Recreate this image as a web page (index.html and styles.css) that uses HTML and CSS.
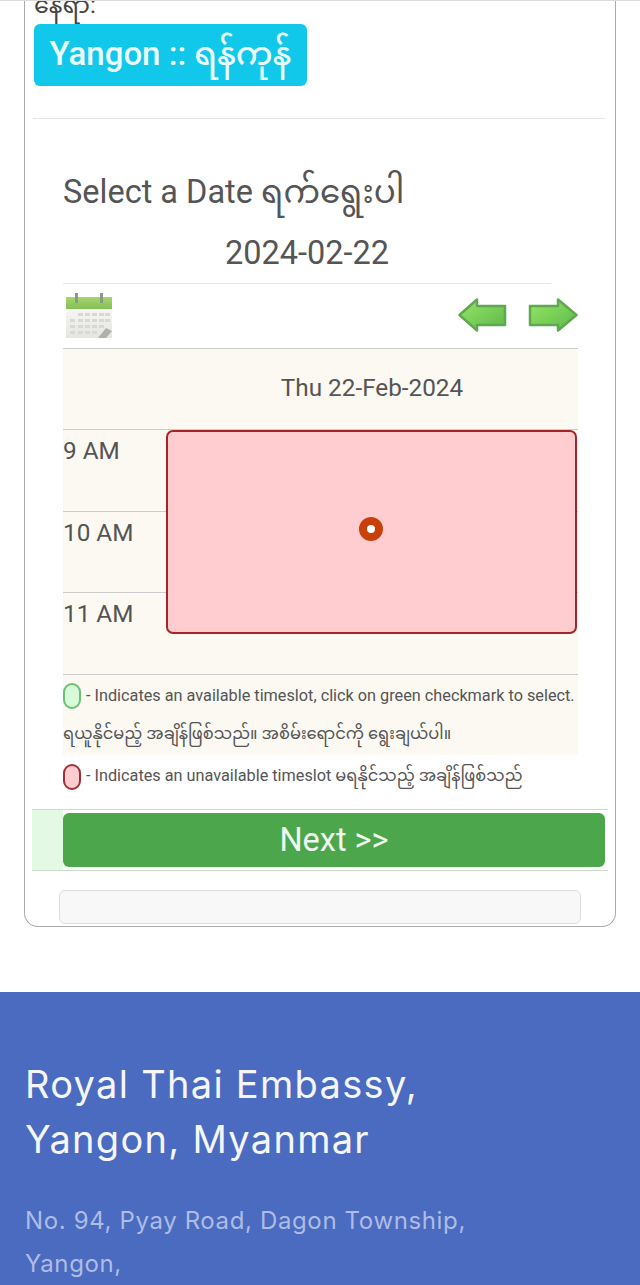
FILE: index.html
```html
<!DOCTYPE html>
<html lang="my">

<head>
    <meta charset="UTF-8">
    <meta name="viewport" content="width=device-width, initial-scale=1.0">
    <title>Royal Thai Embassy, Yangon</title>
    <link rel="stylesheet" href="styles.css">
</head>

<body>
    <div class="card">
        <div class="place-label"><span>နေရာ:</span></div>
        <div class="place-badge">Yangon :: ရန်ကုန်</div>
        <hr class="rule">

        <h2 class="date-title">Select a Date ရက်ရွေးပါ</h2>
        <div class="date-value">2024-02-22</div>

        <div class="toolbar">
            <!-- Calendar icon -->
            <svg class="cal-icon" width="46" height="46" viewBox="0 0 46 46">
                <defs>
                    <linearGradient id="calTop" x1="0" y1="0" x2="0" y2="1">
                        <stop offset="0" stop-color="#a5d56f" />
                        <stop offset="1" stop-color="#86bf55" />
                    </linearGradient>
                    <linearGradient id="calBody" x1="0" y1="0" x2="0" y2="1">
                        <stop offset="0" stop-color="#f6f6f4" />
                        <stop offset="1" stop-color="#e4e4e0" />
                    </linearGradient>
                </defs>
                <rect x="0" y="16" width="46" height="29" fill="url(#calBody)" />
                <rect x="0" y="4" width="46" height="12" fill="url(#calTop)" />
                <rect x="9" y="0" width="3" height="10" fill="#8a9a80" />
                <rect x="34" y="0" width="3" height="10" fill="#8a9a80" />
                <g fill="#d8d8d4">
                    <rect x="12" y="20" width="5" height="3" /><rect x="19" y="20" width="5" height="3" /><rect x="26" y="20" width="5" height="3" /><rect x="33" y="20" width="5" height="3" /><rect x="39" y="20" width="5" height="3" />
                    <rect x="4" y="26" width="5" height="3" /><rect x="12" y="26" width="5" height="3" /><rect x="19" y="26" width="5" height="3" /><rect x="26" y="26" width="5" height="3" /><rect x="33" y="26" width="5" height="3" /><rect x="39" y="26" width="5" height="3" />
                    <rect x="4" y="32" width="5" height="3" /><rect x="12" y="32" width="5" height="3" /><rect x="19" y="32" width="5" height="3" /><rect x="26" y="32" width="5" height="3" /><rect x="33" y="32" width="5" height="3" />
                    <rect x="4" y="38" width="5" height="3" /><rect x="12" y="38" width="5" height="3" /><rect x="19" y="38" width="5" height="3" /><rect x="26" y="38" width="5" height="3" />
                </g>
                <path d="M32 45 L40 35 L46 38 L40 45 Z" fill="#b0b0ac" />
            </svg>
            <div class="arrows">
                <svg width="49" height="34" viewBox="0 0 49 34">
                    <defs>
                        <linearGradient id="arrowFill" x1="0" y1="0" x2="1" y2="1">
                            <stop offset="0" stop-color="#96e664" />
                            <stop offset="1" stop-color="#5db84a" />
                        </linearGradient>
                    </defs>
                    <path d="M1.5 17 L19 1.5 L19 8 L47 8 L47 27 L19 27 L19 32.5 Z" fill="url(#arrowFill)" stroke="#5fa850" stroke-width="2.5" stroke-linejoin="round" />
                </svg>
                <svg width="50" height="34" viewBox="0 0 50 34">
                    <path d="M2 8 L30 8 L30 1.5 L48.5 17 L30 32.5 L30 27 L2 27 Z" fill="url(#arrowFill)" stroke="#5fa850" stroke-width="2.5" stroke-linejoin="round" />
                </svg>
            </div>
        </div>

        <div class="schedule">
            <div class="schedule-head">Thu 22-Feb-2024</div>
            <div class="hour-row">9 AM</div>
            <div class="hour-row">10 AM</div>
            <div class="hour-row">11 AM</div>
            <div class="booked"><span class="booked-dot"></span></div>
        </div>

        <div class="legend">
            <div class="legend-row shaded first"><span class="pill pill-green"></span>- Indicates an available timeslot, click on green checkmark to select.</div>
            <div class="legend-row shaded">ရယူနိုင်မည့် အချိန်ဖြစ်သည်။ အစိမ်းရောင်ကို ရွေးချယ်ပါ။</div>
            <div class="legend-row last"><span class="pill pill-red"></span>- Indicates an unavailable timeslot မရနိုင်သည့် အချိန်ဖြစ်သည်</div>
        </div>

        <div class="next-bar">
            <button class="next-button">Next &gt;&gt;</button>
        </div>

        <div class="note-box"></div>
    </div>

    <footer class="footer">
        <h2>Royal Thai Embassy,<br>Yangon, Myanmar</h2>
        <p>No. 94, Pyay Road, Dagon Township,<br>Yangon,</p>
    </footer>
</body>

</html>
```

FILE: styles.css
```css
* {
    margin: 0;
    padding: 0;
    box-sizing: border-box;
}

body {
    font-family: Roboto, "Noto Sans Myanmar", "Noto Sans", sans-serif;
    background-color: #fff;
    color: #555;
    border-top: 1px solid #ddd;
    height: 1285px;
    overflow: hidden;
}

/* Main card */
.card {
    margin: 0 24px;
    height: 927px;
    margin-top: -1px;
    border: 1px solid #aaa;
    border-top: none;
    border-radius: 0 0 14px 14px;
    padding: 0 7px 0 9px;
}

.place-label {
    height: 24px;
    overflow: hidden;
    display: flex;
    align-items: flex-end;
    padding-bottom: 4px;
    font-size: 24px;
    line-height: 30px;
    color: #444;
}

.place-badge {
    width: 273px;
    height: 62px;
    background-color: #12c8ea;
    border-radius: 6px;
    color: #eafcff;
    font-size: 33px;
    font-weight: 500;
    line-height: 60px;
    text-align: center;
    white-space: nowrap;
}

.rule {
    border: none;
    border-top: 1px solid #e6e6e6;
    margin: 32px 0 0 -1px;
    width: 573px;
}

.date-title {
    font-size: 32.5px;
    font-weight: 400;
    line-height: 44px;
    margin: 51px 0 0 29px;
}

.date-value {
    font-size: 32.5px;
    line-height: 44px;
    text-align: center;
    width: 488px;
    margin: 17px 0 0 29px;
    height: 53px;
    border-bottom: 1px solid #e6e6e6;
}

.toolbar {
    display: flex;
    justify-content: space-between;
    align-items: flex-start;
    margin-left: 29px;
    width: 515px;
    height: 65px;
    padding: 9px 0 0 3px;
    border-bottom: 1px solid #ccc;
}

.arrows {
    display: flex;
    gap: 21px;
    padding-top: 5px;
}

/* Day schedule */
.schedule {
    position: relative;
    margin-left: 29px;
    width: 515px;
    background-color: #fbf9f2;
}

.schedule-head {
    height: 81px;
    padding-left: 103px;
    text-align: center;
    font-size: 24.3px;
    line-height: 77px;
    border-bottom: 1px solid #ccc;
}

.hour-row {
    height: 81.5px;
    font-size: 24.3px;
    line-height: 42px;
    border-bottom: 1px solid #ccc;
}

.booked {
    position: absolute;
    left: 103px;
    right: 1px;
    top: 81px;
    height: 204px;
    background-color: #ffcdd0;
    border: 2px solid #a52428;
    border-radius: 7px;
    display: flex;
    align-items: center;
    justify-content: center;
    padding: 0 2px 6px 0;
}

.booked-dot {
    width: 24px;
    height: 24px;
    border-radius: 50%;
    border: 8px solid #c8410a;
    background-color: #fff;
}

/* Legend */
.legend {
    margin-left: 29px;
    width: 515px;
    font-size: 16.25px;
    margin-bottom: 14px;
}

.legend-row {
    height: 40px;
    display: flex;
    align-items: center;
    white-space: nowrap;
}

.legend-row.shaded {
    background-color: #fbf9f2;
}

.legend-row.first {
    padding-top: 2px;
}

.legend-row.last {
    padding-top: 4px;
}

.pill {
    width: 18px;
    height: 26px;
    border-radius: 9px;
    margin-right: 5px;
    border: 2px solid;
}

.pill-green {
    background-color: #d8fad8;
    border-color: #6cc070;
}

.pill-red {
    background-color: #ffcdd0;
    border-color: #a03038;
}

/* Next */
.next-bar {
    margin-left: -2px;
    width: 576px;
    height: 62px;
    background: linear-gradient(to right, #e4f9e4 31px, #fff 31px);
    border-top: 1px solid #c8dcc8;
    border-bottom: 1px solid #c8dcc8;
    padding: 3px 3px 3px 31px;
}

.next-button {
    display: block;
    width: 100%;
    height: 54px;
    background-color: #4ca64c;
    border: none;
    border-radius: 6px;
    color: #eef8ee;
    font-family: inherit;
    font-size: 32.5px;
    cursor: pointer;
}

.note-box {
    margin: 19px 0 0 25px;
    width: 522px;
    height: 34px;
    background-color: #f8f8f8;
    border: 1px solid #ddd;
    border-radius: 6px;
}

/* Footer */
.footer {
    margin-top: 65px;
    height: 293px;
    background-color: #4a6bbf;
    padding: 65px 25px 0;
}

.footer h2 {
    font-family: Inter, sans-serif;
    font-size: 38px;
    font-weight: 400;
    line-height: 55px;
    letter-spacing: 1.3px;
    color: #f4f6fc;
}

.footer p {
    font-family: Inter, sans-serif;
    font-size: 24px;
    line-height: 43px;
    letter-spacing: 0.63px;
    color: #aebce6;
    margin-top: 32px;
}
```
